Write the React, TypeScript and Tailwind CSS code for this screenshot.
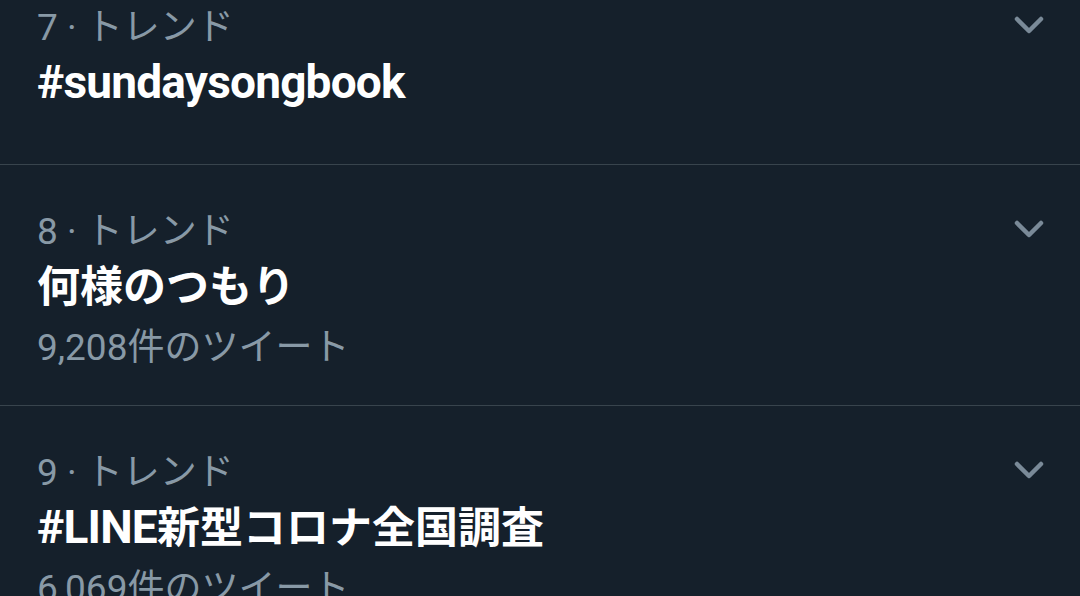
import React from "react";

type Trend = {
  rank: number;
  title: string;
  count?: string;
};

const trends: Trend[] = [
  { rank: 7, title: "#sundaysongbook" },
  { rank: 8, title: "何様のつもり", count: "9,208件のツイート" },
  { rank: 9, title: "#LINE新型コロナ全国調査", count: "6,069件のツイート" },
];

const font = { fontFamily: 'Roboto, "Noto Sans CJK JP", sans-serif' };

// Japanese runs in the title render a bit narrower than the Latin ones
function splitRuns(s: string) {
  return s.split(/([\u3000-\u9fff]+)/).filter(Boolean);
}

function Chevron() {
  return (
    <svg width="30" height="18" viewBox="0 0 30 18" fill="none">
      <polyline
        points="3,3 15,15 27,3"
        stroke="#7a8a98"
        strokeWidth="4.5"
        strokeLinecap="round"
        strokeLinejoin="round"
      />
    </svg>
  );
}

function TrendRow({ t, first }: { t: Trend; first: boolean }) {
  return (
    <div
      className={`flex border-b border-[#38444d] pl-[37px] pr-[36px] ${
        first ? "pt-[4px] pb-[52px]" : "pt-[43px] pb-[26px]"
      }`}
    >
      <div className="flex-1 min-w-0">
        <div className="text-[37px] leading-[48px] text-[#8899a6]">
          {t.rank} · トレンド
        </div>
        <div className="text-[46px] leading-[60px] font-bold text-white tracking-[-0.8px]">
          {splitRuns(t.title).map((r, i) =>
            /[\u3000-\u9fff]/.test(r) ? (
              <span key={i} className="text-[43px] tracking-normal">
                {r}
              </span>
            ) : (
              <span key={i}>{r}</span>
            )
          )}
        </div>
        {t.count && (
          <div className="text-[37px] leading-[62px] text-[#8899a6]">{t.count}</div>
        )}
      </div>
      <div className="flex h-[42px] items-center">
        <Chevron />
      </div>
    </div>
  );
}

export default function App() {
  return (
    <div className="h-[596px] w-[1080px] overflow-hidden bg-[#15202b]" style={font}>
      {trends.map((t, i) => (
        <TrendRow key={t.rank} t={t} first={i === 0} />
      ))}
    </div>
  );
}
